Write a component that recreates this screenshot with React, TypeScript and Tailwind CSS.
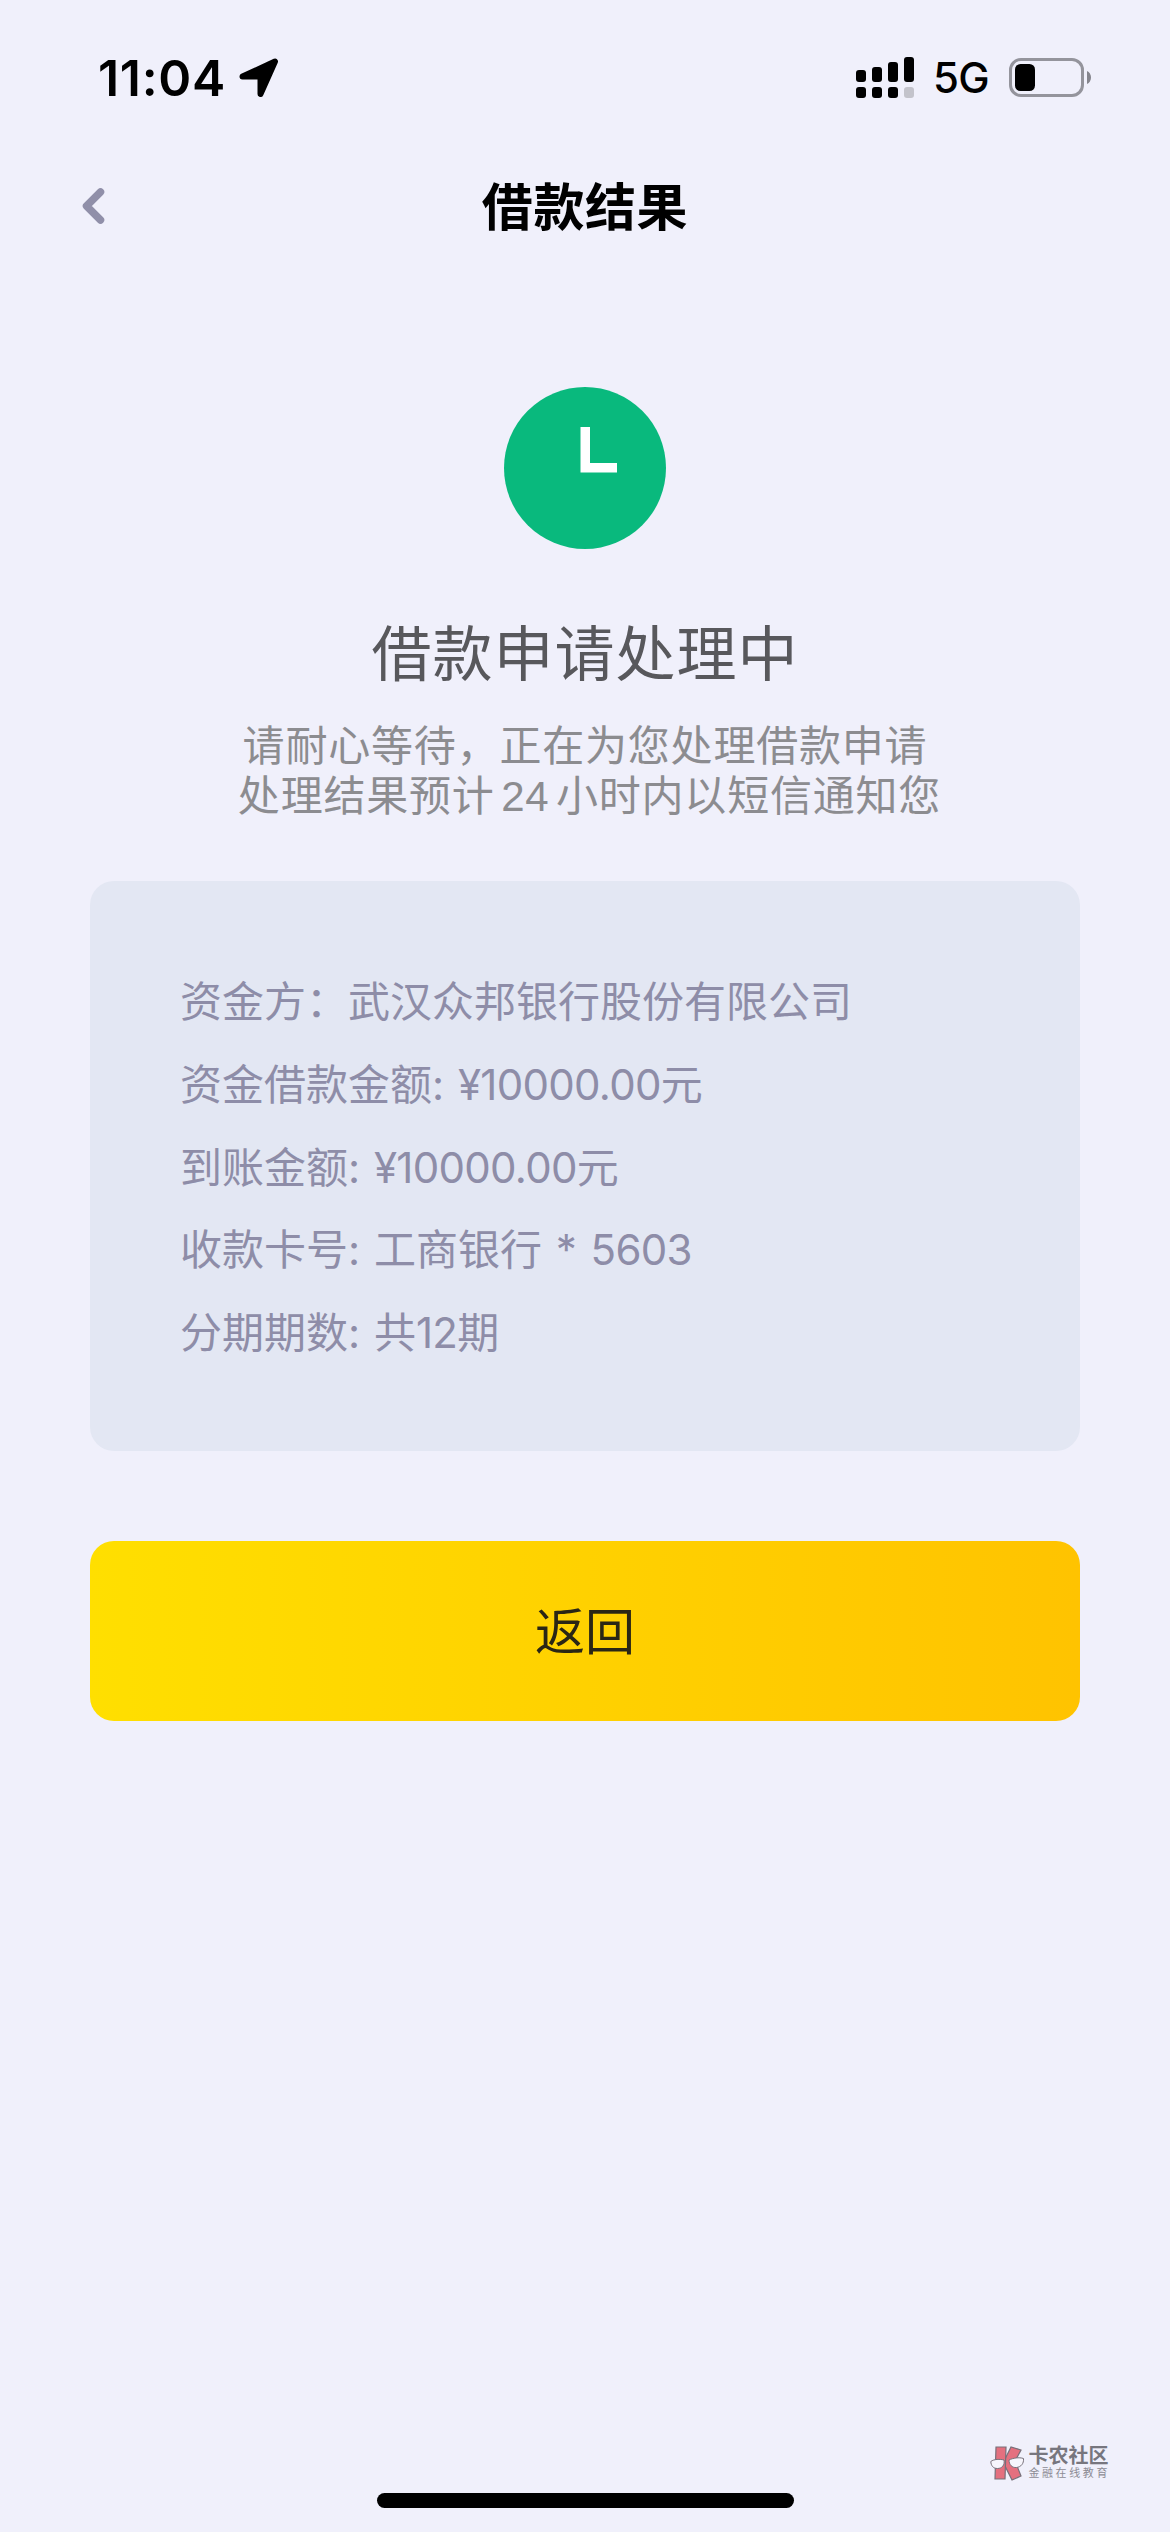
import type { ReactNode } from "react";

const Num = ({ children }: { children: ReactNode }) => (
  <span className="tracking-[-0.7px]">{children}</span>
);

const details = [
  { label: "资金方：", value: "武汉众邦银行股份有限公司" },
  { label: "资金借款金额: ", value: <><Num>¥10000.00</Num>元</> },
  { label: "到账金额: ", value: <><Num>¥10000.00</Num>元</> },
  { label: "收款卡号: ", value: <>工商银行 * <Num>5603</Num></> },
  { label: "分期期数: ", value: <>共<Num>12</Num>期</> },
];

const SignalIcon = () => (
  <svg width="58" height="41" viewBox="0 0 58 41" fill="#000">
    <rect x="0" y="13" width="10" height="12" rx="3" />
    <rect x="16" y="10" width="10" height="15" rx="3" />
    <rect x="32" y="5" width="10" height="20" rx="3" />
    <rect x="48" y="0" width="10" height="25" rx="3" />
    <rect x="0" y="30" width="10" height="11" rx="3" />
    <rect x="16" y="30" width="10" height="11" rx="3" />
    <rect x="32" y="30" width="10" height="11" rx="3" />
    <rect x="48" y="30" width="10" height="11" rx="3" fill="#c3c3cb" />
  </svg>
);

const BatteryIcon = () => (
  <svg width="82" height="39" viewBox="0 0 82 39">
    <rect x="1.5" y="1.5" width="72" height="36" rx="10.5" fill="none" stroke="#94949c" strokeWidth="3" />
    <rect x="6" y="6" width="20" height="27" rx="5.5" fill="#000" />
    <path d="M78 13c2.5 1.2 4 3.5 4 6.5s-1.5 5.3-4 6.5z" fill="#85858d" />
  </svg>
);

const StatusBar = () => (
  <div className="flex h-[155px] shrink-0 items-center pl-[98px] pr-[79px]">
    <span className="w-[128px] whitespace-nowrap text-[50px] font-semibold leading-[60px] tracking-[0.7px]">
      11:04
    </span>
    <svg className="ml-[13px]" width="40" height="40" viewBox="0 0 40 40">
      <path
        d="M3.500 18.500 36 3.500 21.500 36V18.500z"
        fill="#000"
        stroke="#000"
        strokeWidth="6"
        strokeLinejoin="round"
      />
    </svg>
    <div className="ml-auto flex items-center">
      <SignalIcon />
      <span className="ml-[19px] w-[55px] whitespace-nowrap text-[42px] font-medium leading-[50px] tracking-[-0.8px]">
        5G
      </span>
      <div className="ml-[21px]">
        <BatteryIcon />
      </div>
    </div>
  </div>
);

const Header = () => (
  <header className="grid h-[105px] shrink-0 grid-cols-[1fr_auto_1fr] items-center px-[82px]">
    <svg className="mb-[3px]" width="23" height="36" viewBox="0 0 23 36" fill="none">
      <path
        d="M18.500 4 4.500 18l14 14"
        stroke="#908fa9"
        strokeWidth="7.5"
        strokeLinecap="round"
        strokeLinejoin="round"
      />
    </svg>
    <h1 className="text-[51px] font-bold leading-[60px] tracking-[0.6px]">借款结果</h1>
    <span />
  </header>
);

const Watermark = () => (
  <div className="absolute right-[60px] top-[2445px] flex items-center">
    <svg width="36" height="36" viewBox="0 0 36 36">
      <g fill="#e4707f" stroke="#77707a" strokeWidth="1.2">
        <path d="M15 14 21 2l10 3-6 11 6 15-9 4-7-14z" />
        <path d="M6 2h10l-1 32H5z" />
      </g>
      <g fill="#f6f5fc" stroke="#77707a" strokeWidth="1">
        <path d="M.8 16.500C4 14 10 14 14 15c1 5-2 8.500-6.500 8.500S1 20.500.8 16.500z" />
        <path d="M19 15c4-2 10-3 14.500-1.500C34 18.500 31 22 26.500 22.500S19 19.500 19 15z" />
      </g>
    </svg>
    <div className="ml-[2px] text-[#77767e]">
      <div className="whitespace-nowrap text-[20px] font-bold leading-[21px]">卡农社区</div>
      <div className="whitespace-nowrap text-[11px] leading-[13px] tracking-[2.6px] text-[#8d8c95]">金融在线教育</div>
    </div>
  </div>
);

const App = () => {
  return (
    <div className="relative flex h-[2532px] w-[1170px] flex-col overflow-hidden bg-[#f0f0fb] font-[Inter,'Noto_Sans_CJK_SC',sans-serif] text-black">
      <StatusBar />
      <Header />

      <main className="flex flex-col px-[90px] pt-[127px]">
        <svg className="self-center" width="162" height="162" viewBox="0 0 162 162">
          <circle cx="81" cy="81" r="81" fill="#09b97d" />
          <path d="M76.500 40h9.500v36h27v9.500H76.500z" fill="#fff" />
        </svg>

        <h2 className="mt-[65px] text-center text-[60px] leading-[80px] tracking-[1px] text-[#58585c]">
          借款申请处理中
        </h2>
        <div className="mt-[27px] text-center text-[42px] leading-[50px] tracking-[0.8px] text-[#8c8c90]">
          <p>请耐心等待，正在为您处理借款申请</p>
          <p className="pl-[9px]">
            处理结果预计
            <span className="mx-[6.5px] font-['Liberation_Sans',sans-serif] leading-none">24</span>
            小时内以短信通知您
          </p>
        </div>

        <div className="mt-[60px] h-[570px] rounded-[24px] bg-[#e3e7f3] px-[90px] pt-[80px] text-[42px] leading-[82.75px] text-[#8e8da8] [word-spacing:2px]">
          {details.map((item) => (
            <p key={item.label} className="whitespace-nowrap">
              {item.label}
              {item.value}
            </p>
          ))}
        </div>

        <button className="mt-[90px] h-[180px] rounded-[24px] bg-linear-to-r from-[#ffdf00] to-[#ffc300] pt-[3px] text-[50px] text-[#2a2615]">
          返回
        </button>
      </main>

      <div className="mb-[24px] mt-auto h-[15px] w-[417px] shrink-0 self-center rounded-full bg-black" />
      <Watermark />
    </div>
  );
};

export default App;
